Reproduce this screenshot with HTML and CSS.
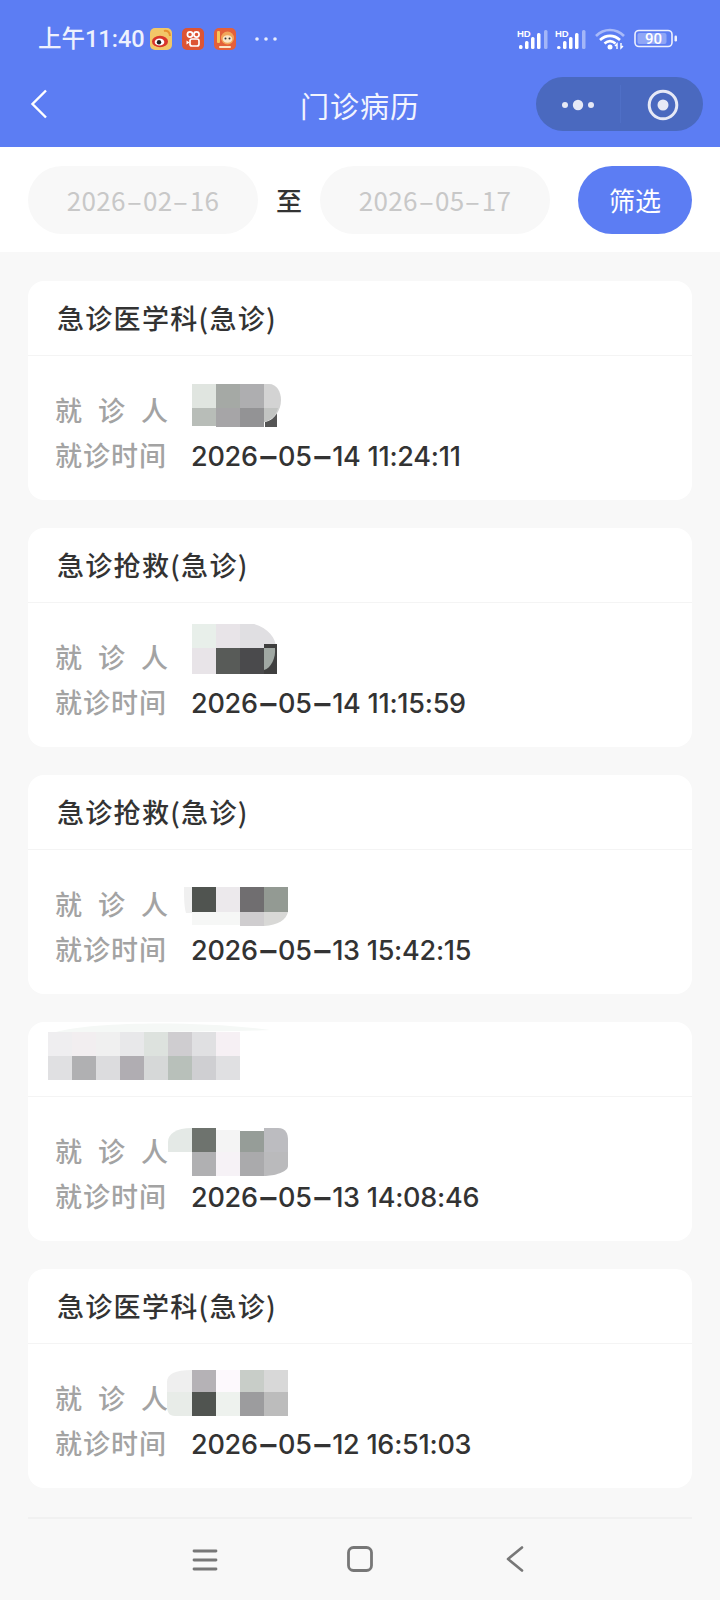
FILE: index.html
```html
<!DOCTYPE html>
<html lang="zh-CN">

<head>
    <meta charset="UTF-8">
    <title>门诊病历</title>
    <link rel="stylesheet" href="styles.css">
</head>

<body>
    <div class="page">
        <div class="header">
            <div class="status">
                <div class="status-left">
                    <span class="time">上午11:40</span>
                    <svg class="app" viewBox="0 0 22 22">
                        <rect width="22" height="22" rx="5" fill="#f2c768"/>
                        <path d="M14 3c3-1 6 1 6 5" fill="none" stroke="#e8912f" stroke-width="2"/>
                        <ellipse cx="10" cy="13.5" rx="8" ry="5.8" fill="#d8352a"/>
                        <ellipse cx="9.5" cy="14" rx="4.8" ry="3.6" fill="#fff"/>
                        <circle cx="9" cy="14.3" r="2.2" fill="#222"/>
                    </svg>
                    <svg class="app app-gap" viewBox="0 0 22 22">
                        <rect width="22" height="22" rx="5" fill="#dd5434"/>
                        <circle cx="8" cy="6.5" r="2.6" fill="none" stroke="#fff" stroke-width="1.7"/>
                        <circle cx="14.5" cy="6.5" r="2.6" fill="none" stroke="#fff" stroke-width="1.7"/>
                        <rect x="8" y="11" width="9" height="7" rx="2" fill="none" stroke="#fff" stroke-width="1.7"/>
                        <path d="M4.500 12.500l3 2-3 2z" fill="#fff"/>
                    </svg>
                    <svg class="app app-gap" viewBox="0 0 22 22">
                        <rect width="22" height="22" rx="5" fill="#e4603a"/>
                        <rect x="3" y="3" width="3" height="12" rx="1" fill="#f6c65c"/>
                        <circle cx="13.500" cy="10" r="6.500" fill="#f2a65a"/>
                        <ellipse cx="13.500" cy="11" rx="4.800" ry="3.800" fill="#fbe6c8"/>
                        <circle cx="11.500" cy="10.500" r="1" fill="#333"/>
                        <circle cx="15.500" cy="10.500" r="1" fill="#333"/>
                        <rect x="5" y="18" width="12" height="2" rx="1" fill="#fbe6c8"/>
                    </svg>
                    <svg class="more" viewBox="0 0 24 6">
                        <circle cx="3" cy="3" r="1.800" fill="#e8edfc"/>
                        <circle cx="12" cy="3" r="1.800" fill="#e8edfc"/>
                        <circle cx="21" cy="3" r="1.800" fill="#e8edfc"/>
                    </svg>
                </div>
                <div class="status-right">
                    <svg class="signal" viewBox="0 0 32 22">
                        <text x="0" y="9" class="hd">HD</text>
                        <rect x="2" y="17" width="3.500" height="4" rx="1.500" fill="#fff"/>
                        <rect x="8" y="13" width="3.500" height="8" rx="1.500" fill="#fff"/>
                        <rect x="14" y="9" width="3.500" height="12" rx="1.500" fill="#fff"/>
                        <rect x="20" y="5" width="3.500" height="16" rx="1.500" fill="#fff"/>
                        <rect x="27" y="2" width="3.500" height="19" rx="1.500" fill="#a3b6f8"/>
                    </svg>
                    <svg class="signal signal-two" viewBox="0 0 32 22">
                        <text x="0" y="9" class="hd">HD</text>
                        <rect x="2" y="18" width="3.500" height="3" rx="1.500" fill="#fff"/>
                        <rect x="8" y="13" width="3.500" height="8" rx="1.500" fill="#fff"/>
                        <rect x="14" y="9" width="3.500" height="12" rx="1.500" fill="#fff"/>
                        <rect x="20" y="5" width="3.500" height="16" rx="1.500" fill="#fff"/>
                        <rect x="27" y="2" width="3.500" height="19" rx="1.500" fill="#a3b6f8"/>
                    </svg>
                    <svg class="wifi" viewBox="0 0 30 22">
                        <path d="M1 8c8-8 20-8 28 0" fill="none" stroke="#a9baf9" stroke-width="2.600"/>
                        <path d="M5 12c6-5.500 14-5.500 20 0" fill="none" stroke="#fff" stroke-width="2.600"/>
                        <path d="M9.500 15.500c3.500-3 7.500-3 11 0" fill="none" stroke="#fff" stroke-width="2.600"/>
                        <circle cx="15" cy="19" r="2.500" fill="#fff"/>
                        <path d="M22 21v-5l-2 2M26 15v5l2-2" fill="none" stroke="#fff" stroke-width="1.400"/>
                    </svg>
                    <svg class="battery" viewBox="0 0 44 20">
                        <rect x="1" y="1.500" width="37" height="16" rx="4" fill="none" stroke="#eef1fd" stroke-width="1.600"/>
                        <rect x="3.500" y="4" width="29" height="11" rx="2" fill="#8fa6f7"/>
                        <text x="19.500" y="15" class="battery-num">90</text>
                        <rect x="40.500" y="6.500" width="2.500" height="6" rx="1.200" fill="#eef1fd"/>
                    </svg>
                </div>
            </div>
            <div class="navbar">
                <svg class="back" viewBox="0 0 18 30">
                    <path d="M16 1.500L2.500 15 16 28.500" fill="none" stroke="#fff" stroke-width="2.400"/>
                </svg>
                <div class="title">门诊病历</div>
                <div class="capsule">
                    <svg class="capsule-dots" viewBox="0 0 34 12">
                        <circle cx="4" cy="6" r="3" fill="#e6e9f6"/>
                        <circle cx="17" cy="6" r="5.200" fill="#e6e9f6"/>
                        <circle cx="30" cy="6" r="3" fill="#e6e9f6"/>
                    </svg>
                    <i class="capsule-line"></i>
                    <svg class="capsule-target" viewBox="0 0 32 32">
                        <circle cx="16" cy="16" r="13.800" fill="none" stroke="#e6e9f6" stroke-width="3"/>
                        <circle cx="16" cy="16" r="5.500" fill="#e6e9f6"/>
                    </svg>
                </div>
            </div>
        </div>

        <div class="filter">
            <div class="date">2026<span class="dash">-</span>02<span class="dash">-</span>16</div>
            <div class="to">至</div>
            <div class="date">2026<span class="dash">-</span>05<span class="dash">-</span>17</div>
            <div class="btn">筛选</div>
        </div>

        <div class="list">
            <div class="card">
                <div class="card-title">急诊医学科(急诊)</div>
                <div class="card-body">
                    <div class="row"><span class="label label-name">就诊人</span></div>
                    <div class="row"><span class="label">就诊时间</span><span class="value">2026<span class="dash">-</span>05<span class="dash">-</span>14 11:24:11</span></div>
                </div>
                <svg class="mosaic mosaic-1" width="92" height="44" viewBox="0 0 92 44">
                    <rect width="24" height="24" fill="#e0e5e0"/>
                    <rect x="24" width="24" height="24" fill="#a5a9a5"/>
                    <rect x="48" width="24" height="24" fill="#aeaeb0"/>
                    <rect y="24" width="24" height="18" fill="#b8bdb8"/>
                    <rect x="24" y="24" width="24" height="19" fill="#a6a5a7"/>
                    <rect x="48" y="24" width="24" height="19" fill="#939395"/>
                    <path d="M73 38Q82 36 85 28V43H73z" fill="#555"/>
                    <path d="M72 0h5c8 0 12 8 12 16 0 11-7 20-17 22z" fill="#d3d3d3"/>
                    <path d="M72 24h14c-2 7-6 12-14 14z" fill="#c2c4c2"/>
                </svg>
            </div>

            <div class="card">
                <div class="card-title">急诊抢救(急诊)</div>
                <div class="card-body">
                    <div class="row"><span class="label label-name">就诊人</span></div>
                    <div class="row"><span class="label">就诊时间</span><span class="value">2026<span class="dash">-</span>05<span class="dash">-</span>14 11:15:59</span></div>
                </div>
                <svg class="mosaic mosaic-2" width="90" height="52" viewBox="0 0 90 52">
                    <rect width="24" height="24" fill="#e8efea"/>
                    <rect x="24" width="24" height="24" fill="#e8e4e8"/>
                    <path d="M48 0h14c14 4 22 14 22 24H48z" fill="#e0dfe2"/>
                    <rect y="24" width="24" height="26" fill="#e8e4e8"/>
                    <rect x="24" y="24" width="24" height="26" fill="#585b58"/>
                    <rect x="48" y="24" width="24" height="26" fill="#4a4a4c"/>
                    <rect x="72" y="20" width="13" height="30" fill="#3f3f3f"/>
                    <path d="M72 24h11c1 10-4 20-11 22z" fill="#a0a8a3"/>
                </svg>
            </div>

            <div class="card">
                <div class="card-title">急诊抢救(急诊)</div>
                <div class="card-body">
                    <div class="row"><span class="label label-name">就诊人</span></div>
                    <div class="row"><span class="label">就诊时间</span><span class="value">2026<span class="dash">-</span>05<span class="dash">-</span>13 15:42:15</span></div>
                </div>
                <svg class="mosaic mosaic-3" width="108" height="40" viewBox="0 0 108 40">
                    <path d="M0 0h8v26H2C0 20 0 8 0 0z" fill="#f0f0f0"/>
                    <rect x="8" width="24" height="25" fill="#505450"/>
                    <rect x="32" width="24" height="25" fill="#ece9ec"/>
                    <rect x="56" width="24" height="25" fill="#706e70"/>
                    <rect x="80" width="24" height="25" fill="#939a93"/>
                    <rect x="8" y="25" width="48" height="13" fill="#f6f7f6"/>
                    <rect x="56" y="25" width="24" height="14" fill="#cfcdcf"/>
                    <path d="M80 25h24c-2 8-10 13-24 14z" fill="#d8d8d6"/>
                </svg>
            </div>

            <div class="card">
                <div class="card-title card-title-empty"></div>
                <div class="card-body">
                    <div class="row"><span class="label label-name">就诊人</span></div>
                    <div class="row"><span class="label">就诊时间</span><span class="value">2026<span class="dash">-</span>05<span class="dash">-</span>13 14:08:46</span></div>
                </div>
                <svg class="mosaic mosaic-4a" width="222" height="60" viewBox="0 0 222 60">
                    <path d="M8 12C40 2 150 0 222 10 180 12 60 12 8 12z" fill="#f5f8f6"/>
                    <g transform="translate(0 12)">
                        <rect width="24" height="24" fill="#efeef0"/>
                        <rect x="24" width="24" height="24" fill="#f2eef0"/>
                        <rect x="48" width="24" height="24" fill="#f0f0f0"/>
                        <rect x="72" width="24" height="24" fill="#e8e8ea"/>
                        <rect x="96" width="24" height="24" fill="#dde2de"/>
                        <rect x="120" width="24" height="24" fill="#cfcdd0"/>
                        <rect x="144" width="24" height="24" fill="#e0e0e2"/>
                        <rect x="168" width="24" height="24" fill="#f6f0f4"/>
                        <rect y="24" width="24" height="24" fill="#e0e0e2"/>
                        <rect x="24" y="24" width="24" height="24" fill="#b0b0b2"/>
                        <rect x="48" y="24" width="24" height="24" fill="#dcdcde"/>
                        <rect x="72" y="24" width="24" height="24" fill="#b0adb2"/>
                        <rect x="96" y="24" width="24" height="24" fill="#d6d8d8"/>
                        <rect x="120" y="24" width="24" height="24" fill="#b8c0ba"/>
                        <rect x="144" y="24" width="24" height="24" fill="#cfcfd2"/>
                        <rect x="168" y="24" width="24" height="24" fill="#e0e0e2"/>
                    </g>
                </svg>
                <svg class="mosaic mosaic-4b" width="122" height="52" viewBox="0 0 122 52">
                    <path d="M24 0v24H0V14C0 6 8 0 24 0z" fill="#e4e9e6"/>
                    <rect x="24" width="24" height="24" fill="#6e736e"/>
                    <rect x="48" y="2" width="24" height="22" fill="#f4f4f4"/>
                    <rect x="72" y="3" width="24" height="21" fill="#969d98"/>
                    <path d="M96 0h14c8 0 10 6 10 12v12H96z" fill="#bcbcc0"/>
                    <rect x="24" y="24" width="24" height="24" fill="#b0b0b2"/>
                    <rect x="48" y="24" width="24" height="24" fill="#f6f2f6"/>
                    <rect x="72" y="24" width="24" height="24" fill="#aaaaac"/>
                    <path d="M96 24h24v14c0 6-14 10-24 10z" fill="#bababc"/>
                </svg>
            </div>

            <div class="card">
                <div class="card-title">急诊医学科(急诊)</div>
                <div class="card-body">
                    <div class="row"><span class="label label-name">就诊人</span></div>
                    <div class="row"><span class="label">就诊时间</span><span class="value">2026<span class="dash">-</span>05<span class="dash">-</span>12 16:51:03</span></div>
                </div>
                <svg class="mosaic mosaic-5" width="122" height="48" viewBox="0 0 122 48">
                    <path d="M25 0v22H0V12C0 4 8 0 25 0z" fill="#efefef"/>
                    <rect x="25" width="24" height="22" fill="#b5b2b6"/>
                    <rect x="49" width="24" height="22" fill="#fdf9fd"/>
                    <rect x="73" y="-1" width="24" height="23" fill="#c8cdc8"/>
                    <rect x="97" y="-2" width="24" height="24" fill="#d8d8d8"/>
                    <path d="M0 22h25v24H8c-6 0-8-4-8-10z" fill="#e8ece8"/>
                    <rect x="25" y="22" width="24" height="24" fill="#505450"/>
                    <rect x="49" y="22" width="24" height="24" fill="#eef2ee"/>
                    <rect x="73" y="22" width="24" height="24" fill="#9c9c9e"/>
                    <rect x="97" y="22" width="24" height="24" fill="#bcbcbc"/>
                </svg>
            </div>
        </div>

        <div class="bottom-nav">
            <svg class="nav-menu" viewBox="0 0 26 24">
                <path d="M2 3h22M2 12h22M2 21h22" fill="none" stroke="#777" stroke-width="2.800" stroke-linecap="round"/>
            </svg>
            <svg class="nav-home" viewBox="0 0 26 26">
                <rect x="1.500" y="1.500" width="23" height="23" rx="5" fill="none" stroke="#777" stroke-width="2.800"/>
            </svg>
            <svg class="nav-back" viewBox="0 0 18 26">
                <path d="M16 1.500L2 13l14 11.500" fill="none" stroke="#777" stroke-width="2.600" stroke-linecap="round" stroke-linejoin="round"/>
            </svg>
        </div>
    </div>
</body>

</html>
```
FILE: styles.css
```css
* {
    padding: 0;
    margin: 0;
    box-sizing: border-box;
}

body {
    width: 720px;
    height: 1600px;
    overflow: hidden;
    background-color: #f8f8f8;
    font-family: "Noto Sans CJK SC", "Noto Sans", sans-serif;
    color: #333;
}

.page {
    display: flex;
    flex-direction: column;
    height: 1600px;
}

/* top blue part */
.header {
    height: 147px;
    background-color: #5c7df3;
    color: #fff;
}

.status {
    display: flex;
    justify-content: space-between;
    align-items: center;
    height: 54px;
    padding: 24px 42px 0 38px;
}

.status-left,
.status-right {
    display: flex;
    align-items: center;
}

.time {
    width: 112px;
    font-size: 23.500px;
    line-height: 30px;
    font-family: "Roboto", "Noto Sans CJK SC", sans-serif;
    font-weight: 500;
    color: #eef1fd;
}

.app {
    width: 22px;
    height: 22px;
}

.app-gap {
    margin-left: 10px;
}

.more {
    width: 24px;
    height: 6px;
    margin-left: 18px;
}

.signal {
    width: 32px;
    height: 22px;
}

.signal-two {
    margin-left: 6px;
}

.hd {
    font-family: "Liberation Sans", sans-serif;
    font-size: 9.500px;
    font-weight: 700;
    fill: #fff;
}

.wifi {
    width: 30px;
    height: 22px;
    margin-left: 8px;
}

.battery {
    width: 44px;
    height: 20px;
    margin-left: 9px;
}

.battery-num {
    font-family: "Roboto", sans-serif;
    font-size: 15px;
    font-weight: 500;
    fill: #fff;
    text-anchor: middle;
}

.navbar {
    position: relative;
    display: flex;
    align-items: center;
    justify-content: space-between;
    height: 54px;
    margin-top: 23px;
    padding: 0 17px 0 30px;
}

.back {
    width: 18px;
    height: 30px;
}

.title {
    position: absolute;
    left: 0;
    right: 0;
    padding-top: 2px;
    text-align: center;
    font-size: 29px;
    line-height: 54px;
    letter-spacing: 1px;
    color: #f2f4fe;
}

.capsule {
    display: flex;
    align-items: center;
    width: 167px;
    height: 54px;
    padding-left: 25px;
    border-radius: 27px;
    background-color: #4a69bf;
}

.capsule-dots {
    width: 34px;
    height: 12px;
    margin-top: 2px;
}

.capsule-line {
    width: 1px;
    height: 38px;
    margin-left: 25px;
    background-color: #4f6fc6;
}

.capsule-target {
    width: 32px;
    height: 32px;
    margin-top: 2px;
    margin-left: 26px;
}

/* date filter */
.filter {
    display: flex;
    align-items: center;
    height: 105px;
    padding: 0 28px;
    background-color: #fff;
}

.date {
    width: 230px;
    height: 68px;
    border-radius: 34px;
    background-color: #f8f8f8;
    text-align: center;
    font-size: 26px;
    line-height: 68px;
    letter-spacing: 0.300px;
    color: #c8c8c8;
}

.dash {
    display: inline-block;
    margin: 0 4px;
    transform: scaleX(1.8);
}

.to {
    width: 62px;
    text-align: center;
    font-size: 26px;
    font-weight: 500;
    color: #333;
}

.btn {
    width: 114px;
    height: 68px;
    margin-left: auto;
    border-radius: 34px;
    background-color: #5c7df3;
    text-align: center;
    font-size: 26px;
    line-height: 68px;
    color: #fff;
}

/* record cards */
.list {
    flex: 1;
    padding: 29px 28px 0;
}

.card {
    position: relative;
    height: 219px;
    margin-bottom: 28px;
    border-radius: 16px;
    background-color: #fff;
}

.card-title {
    height: 75px;
    padding-left: 29px;
    border-bottom: 1px solid #f4f4f4;
    font-size: 27px;
    line-height: 74px;
    font-weight: 500;
    letter-spacing: 1.300px;
    color: #333;
}

.card-body {
    padding-top: 31px;
}

.row {
    display: flex;
    align-items: center;
    height: 45px;
    padding-left: 27px;
}

.label {
    width: 137px;
    font-size: 27px;
    font-weight: 500;
    letter-spacing: 1px;
    color: #a3a3a3;
}

.label-name {
    width: 137px;
    letter-spacing: 16px;
}

.value {
    padding-top: 3px;
    margin-left: -1px;
    font-family: "Inter", "Noto Sans CJK SC", sans-serif;
    font-size: 27px;
    font-weight: 500;
    letter-spacing: -0.250px;
    color: #333;
}

.value .dash {
    font-weight: 700;
}

.mosaic {
    position: absolute;
}

.mosaic-1 {
    left: 164px;
    top: 103px;
}

.mosaic-2 {
    left: 164px;
    top: 96px;
}

.mosaic-3 {
    left: 156px;
    top: 112px;
}

.mosaic-4a {
    left: 20px;
    top: -2px;
}

.mosaic-4b {
    left: 140px;
    top: 106px;
}

.mosaic-5 {
    left: 139px;
    top: 101px;
}

/* system nav */
.bottom-nav {
    position: relative;
    height: 83px;
    margin: 0 28px;
    border-top: 2px solid #f1f1f1;
}

.nav-menu,
.nav-home,
.nav-back {
    position: absolute;
}

.nav-menu {
    left: 164px;
    top: 29px;
    width: 26px;
    height: 24px;
}

.nav-home {
    left: 319px;
    top: 27px;
    width: 26px;
    height: 26px;
}

.nav-back {
    left: 478px;
    top: 27px;
    width: 18px;
    height: 26px;
}
```
